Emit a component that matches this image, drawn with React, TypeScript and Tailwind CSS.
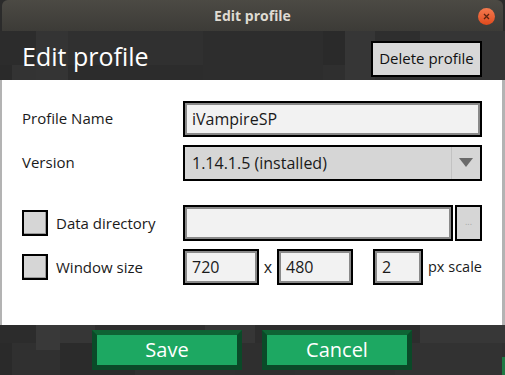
import React from "react";

const font = { fontFamily: '"Open Sans", "Noto Sans", sans-serif' };

function Texture({ rects }: { rects: [number, number, number, number, string][] }) {
  return (
    <svg className="absolute inset-0" width="505" height="60" viewBox="0 0 505 60" preserveAspectRatio="none">
      {rects.map(([x, y, w, h, c], i) => (
        <rect key={i} x={x} y={y} width={w} height={h} fill={c} />
      ))}
    </svg>
  );
}

const headerRects: [number, number, number, number, string][] = [
  [0, 0, 505, 60, "#2f2f2f"],
  [0, 0, 36, 34, "#2c2c2c"],
  [36, 0, 32, 60, "#343434"],
  [68, 0, 135, 34, "#303030"],
  [203, 0, 120, 60, "#2d2d2d"],
  [323, 0, 22, 34, "#2a2a2a"],
  [345, 0, 30, 60, "#363636"],
  [375, 0, 45, 34, "#2e2e2e"],
  [420, 0, 85, 60, "#353535"],
  [0, 34, 12, 26, "#2a2a2a"],
  [12, 34, 24, 26, "#333333"],
  [68, 34, 135, 26, "#2c2c2c"],
  [375, 34, 45, 26, "#323232"],
];

const footerRects: [number, number, number, number, string][] = [
  [0, 0, 505, 60, "#303030"],
  [0, 0, 36, 18, "#2c2c2c"],
  [36, 0, 24, 25, "#393939"],
  [60, 0, 35, 18, "#363636"],
  [95, 0, 110, 18, "#2e2e2e"],
  [205, 0, 50, 18, "#363636"],
  [255, 0, 165, 18, "#2d2d2d"],
  [420, 0, 85, 18, "#373737"],
  [0, 18, 12, 40, "#2a2a2a"],
  [12, 18, 24, 40, "#303030"],
  [60, 18, 75, 40, "#2b2b2b"],
  [235, 18, 60, 40, "#2f2f2f"],
  [395, 18, 107, 40, "#323232"],
  [502, 32, 3, 30, "#1e7a44"],
];

function Input({ value, w }: { value: string; w: string }) {
  return (
    <div
      className={`${w} h-[36px] border-2 border-black bg-[#f2f2f2] shadow-[inset_0_0_0_2px_#8a8a8a] flex items-center pl-[7px] text-[16px] text-[#1a1a1a]`}
    >
      {value}
    </div>
  );
}

function Checkbox() {
  return (
    <div className="w-[26px] h-[26px] border-2 border-black bg-[#d6d6d6] shadow-[inset_-1px_-1px_0_#9a9a9a]" />
  );
}

export default function App() {
  return (
    <div className="w-[505px] h-[375px] bg-[#2b2b2b] overflow-hidden flex flex-col" style={font}>
      {/* title bar */}
      <div className="mx-[2px] h-[31px] shrink-0 rounded-t-[6px] bg-gradient-to-b from-[#4c4a44] to-[#3c3b37] relative flex items-center justify-center">
        <span className="text-[14px] font-bold text-[#dfdbd2]">Edit profile</span>
        <div className="absolute right-[8px] top-[8px] w-[17px] h-[17px] rounded-full bg-gradient-to-b from-[#f47a4e] to-[#e0491a] flex items-center justify-center">
          <svg width="7" height="7" viewBox="0 0 7 7">
            <path d="M1 1L6 6M6 1L1 6" stroke="#5a2410" strokeWidth="1.3" />
          </svg>
        </div>
      </div>

      {/* header */}
      <div className="h-[49px] shrink-0 relative overflow-hidden">
        <Texture rects={headerRects} />
        <div className="relative h-full flex items-center justify-between pl-[22px] pr-[23px]">
          <span className="text-[25px] text-white leading-none mt-[2px]">Edit profile</span>
          <div className="w-[111px] h-[36px] mt-[6px] border-2 border-black bg-[#d8d8d8] flex items-center justify-center text-[15px] text-[#111]">
            Delete profile
          </div>
        </div>
      </div>

      {/* body */}
      <div className="h-[245px] shrink-0 bg-white border-l-2 border-r-[3px] border-[#b3b3b3] pt-[21px] pl-[20px] text-[15px] text-[#1a1a1a]">
        <div className="flex items-center h-[35px]">
          <span className="w-[161px]">Profile Name</span>
          <Input value="iVampireSP" w="w-[299px]" />
        </div>
        <div className="flex items-center h-[35px] mt-[9px]">
          <span className="w-[161px]">Version</span>
          <div className="w-[299px] h-[36px] border-2 border-black bg-[#d6d6d6] flex items-center">
            <span className="flex-1 pl-[7px] text-[16px]">1.14.1.5 (installed)</span>
            <div className="w-[29px] h-full border-l border-[#c2c2c2] flex items-center justify-center">
              <svg width="14" height="9" viewBox="0 0 14 9">
                <path d="M0 0H14L7 9Z" fill="#6a6a6a" />
              </svg>
            </div>
          </div>
        </div>
        <div className="flex items-center h-[36px] mt-[25px]">
          <div className="w-[161px] flex items-center gap-[8px]">
            <Checkbox />
            <span>Data directory</span>
          </div>
          <Input value="" w="w-[270px]" />
          <div className="ml-[2px] w-[27px] h-[36px] border-2 border-black bg-[#d6d6d6] flex items-center justify-center text-[9px] text-[#a8a8a8] pb-[3px]">
            ...
          </div>
        </div>
        <div className="flex items-center h-[36px] mt-[8px]">
          <div className="w-[161px] flex items-center gap-[8px]">
            <Checkbox />
            <span>Window size</span>
          </div>
          <Input value="720" w="w-[76px]" />
          <span className="w-[18px] text-center text-[16px]">x</span>
          <Input value="480" w="w-[76px]" />
          <div className="w-[20px]" />
          <Input value="2" w="w-[50px]" />
          <span className="ml-[5px] text-[14.5px]">px scale</span>
        </div>
      </div>

      {/* footer */}
      <div className="flex-1 relative overflow-hidden">
        <Texture rects={footerRects} />
        <div className="relative flex gap-[20px] pl-[92px] pt-[5px]">
          {["Save", "Cancel"].map((t) => (
            <div
              key={t}
              className="w-[150px] h-[40px] border-[5px] border-[#0a4a28] border-t-[#0e6434] bg-[#1da862] flex items-center justify-center text-[20px] text-white"
            >
              {t}
            </div>
          ))}
        </div>
      </div>
    </div>
  );
}
